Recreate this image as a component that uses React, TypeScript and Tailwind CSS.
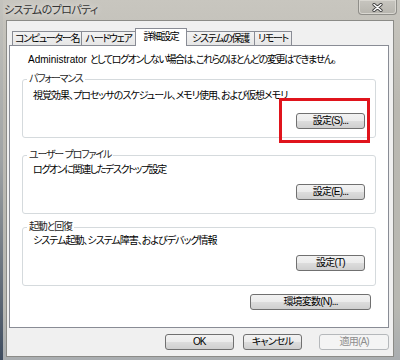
import React from 'react'

/* ── Windows 7 "System Properties" dialog, Advanced tab ── */

const TABS = ['コンピューター名', 'ハードウェア', '詳細設定', 'システムの保護', 'リモート']
const TAB_W = ['w-[70px]', 'w-[55px]', 'w-[52px]', 'w-[69px]', 'w-[38px]']

function Btn({ label, className = '', disabled = false }: { label: string; className?: string; disabled?: boolean }) {
  return (
    <div
      className={
        'flex h-[16px] items-center justify-center whitespace-nowrap rounded-[3px] border text-[10px] leading-none tracking-[-0.8px] ' +
        (disabled
          ? 'border-[#b5b8bb] bg-[#f4f4f4] text-[#8d8d8d] '
          : 'border-[#707070] bg-[linear-gradient(#f2f2f2,#ebebeb_50%,#dddddd_50%,#cfcfcf)] text-black ') +
        className
      }
    >
      {label}
    </div>
  )
}

function Group({
  legend,
  desc,
  button,
  className,
  descClass,
  btnClass,
}: {
  legend: string
  desc: string
  button: string
  className: string
  descClass: string
  btnClass: string
}) {
  return (
    <fieldset className={'mx-[12px] rounded-[3px] border border-[#d5dadd] ' + className}>
      <legend className="ml-[4px] px-[2px] text-[10px] leading-[12px] tracking-[-1.2px] text-[#1e1e1e]">{legend}</legend>
      <div className={'whitespace-nowrap pl-[10px] text-[10px] leading-[14px] ' + descClass}>{desc}</div>
      <div className={'flex justify-end pr-[10px] ' + btnClass}>
        <Btn label={button} className="w-[69px]" />
      </div>
    </fieldset>
  )
}

function CloseGlyph() {
  return (
    <svg width="11" height="9" viewBox="0 0 11 9">
      <path d="M2 1.5 9 7.5M9 1.5 2 7.5" stroke="#3c3c3c" strokeWidth="3.2" strokeLinecap="round" />
      <path d="M2 1.5 9 7.5M9 1.5 2 7.5" stroke="#ffffff" strokeWidth="1.6" strokeLinecap="round" />
    </svg>
  )
}

export default function App() {
  return (
    <div className="relative flex h-[360px] w-[400px] overflow-hidden bg-[linear-gradient(180deg,#c8c6bf,#bab8b1_30%,#b8b8b2_85%,#a9adb0)] font-['Liberation_Sans','Noto_Sans_CJK_JP',sans-serif] text-black [font-feature-settings:'palt']">
      {/* glass edge on the left */}
      <div className="w-[3px] shrink-0 bg-[linear-gradient(180deg,#c4c3bd,#9ea2a4_45%,#3f4d60)]" />

      <div className="flex min-w-0 flex-1 flex-col">
        {/* title bar */}
        <div className="flex h-[20px] shrink-0 items-start justify-between pr-[3px]">
          <span className="pl-[1px] pt-[3px] text-[11px] leading-[14px] tracking-[-0.6px] text-[#353535] [text-shadow:0_0_6px_#ffffff]">
            システムのプロパティ
          </span>
          <div className="flex h-[15px] w-[39px] items-center justify-center rounded-b-[4px] border border-t-0 border-[#8f8e89] bg-[linear-gradient(#c7c5bf,#b7b5ae)] shadow-[inset_0_0_0_1px_#d9d7d1]">
            <CloseGlyph />
          </div>
        </div>

        {/* client area */}
        <div className="mb-[3px] mr-[6px] ml-[3px] flex flex-1 flex-col border border-[#8b8b87] bg-[#f0f0f0] pl-[2px] pr-[4px] pt-[7px]">
          {/* tabs */}
          <div className="flex h-[17px] items-end pl-[3px]">
            {TABS.map((t, i) => {
              const sel = i === 2
              return (
                <div
                  key={t}
                  className={
                    'flex shrink-0 items-center justify-center whitespace-nowrap border border-b-0 border-[#898c95] text-[10px] leading-none tracking-[-1.3px] ' +
                    TAB_W[i] +
                    (i > 0 ? ' -ml-px' : '') +
                    (sel
                      ? ' relative z-10 -mb-px h-[18px] bg-white pb-[2px]'
                      : ' h-[14px] bg-[linear-gradient(#f3f3f3,#e6e6e6)]')
                  }
                >
                  {t}
                </div>
              )
            })}
          </div>

          {/* tab page */}
          <div className="h-[283px] border border-[#898c95] bg-white">
            <div className="mt-[7px] whitespace-nowrap pl-[18px] text-[10px] leading-[14px] tracking-[-1.4px]">
              <span className="tracking-normal">Administrator </span>
              としてログオンしない場合は、これらのほとんどの変更はできません。
            </div>

            <Group
              legend="パフォーマンス"
              desc="視覚効果、プロセッサのスケジュール、メモリ使用、および仮想メモリ"
              button="設定(S)..."
              className="mt-[6px] pb-[8px]"
              descClass="mt-[4px] tracking-[-1px]"
              btnClass="mt-[10px]"
            />
            <Group
              legend="ユーザー プロファイル"
              desc="ログオンに関連したデスクトップ設定"
              button="設定(E)..."
              className="mt-[11px] pb-[13px]"
              descClass="mt-[2px] tracking-[-1.4px]"
              btnClass="mt-[7px]"
            />
            <Group
              legend="起動と回復"
              desc="システム起動、システム障害、およびデバッグ情報"
              button="設定(T)"
              className="mt-[7px] pb-[14px]"
              descClass="mt-[1px] tracking-[-1px]"
              btnClass="mt-[7px]"
            />

            <div className="mt-[8px] flex justify-end pr-[17px]">
              <Btn label="環境変数(N)..." className="w-[121px]" />
            </div>
          </div>

          {/* dialog buttons */}
          <div className="mt-[6px] flex pl-[156px]">
            <Btn label="OK" className="w-[69px]" />
            <Btn label="キャンセル" className="ml-[9px] w-[60px]" />
            <Btn label="適用(A)" className="ml-[17px] w-[70px]" disabled />
          </div>
        </div>
      </div>

      {/* annotation box drawn over the dialog */}
      <div className="pointer-events-none absolute left-[279px] top-[98px] h-[45px] w-[91px] border-[3px] border-[#e0141c]" />
    </div>
  )
}
